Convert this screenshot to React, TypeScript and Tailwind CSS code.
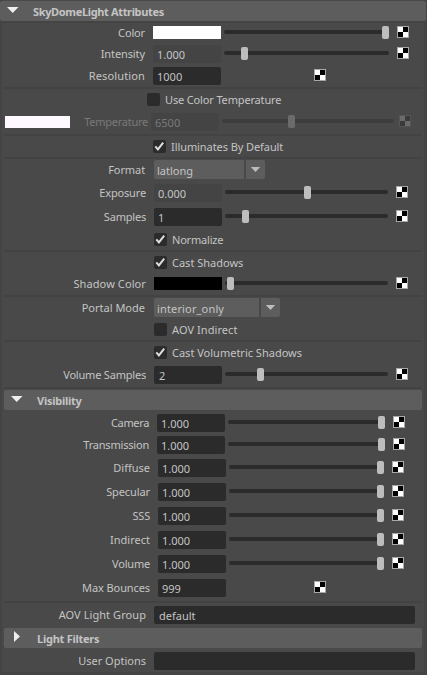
import React from "react";

function Checker({ className = "", dim = false }: { className?: string; dim?: boolean }) {
  const light = dim ? "#6b6b6b" : "#fff";
  const dark = dim ? "#3a3a3a" : "#000";
  return (
    <svg width="12" height="12" viewBox="0 0 12 12" shapeRendering="crispEdges" className={`mt-[2px] shrink-0 ${className}`}>
      <rect width="12" height="12" fill={dim ? "#555" : "#a8a8a8"} />
      <rect x="1" y="1" width="10" height="10" fill={light} />
      <rect x="6" y="1" width="5" height="5" fill={dark} />
      <rect x="1" y="6" width="5" height="5" fill={dark} />
    </svg>
  );
}

function Slider({ track, knob, dim = false }: { track: string; knob: string; dim?: boolean }) {
  return (
    <div className={`h-[18px] shrink-0 pt-[6px] ${track}`}>
      <div className={`relative h-1 rounded-full ${dim ? "bg-[#3d3d3d]" : "bg-[#2b2b2b]"}`}>
        <div className={`absolute -top-1 h-[13px] w-[7px] rounded-[2px] ${dim ? "bg-[#6b6b6b]" : "bg-[#bdbdbd]"} ${knob}`} />
      </div>
    </div>
  );
}

function Label({ className, text }: { className: string; text: string }) {
  return <div className={`shrink-0 text-right whitespace-nowrap leading-[18px] ${className}`}>{text}</div>;
}

function Field({ className = "ml-2 w-[68px] bg-[#2b2b2b] pl-1", value = "" }: { className?: string; value?: string }) {
  return <div className={`h-[18px] shrink-0 rounded-[2px] pt-px leading-[18px] ${className}`}>{value}</div>;
}

function Row({ className, children }: { className: string; children: React.ReactNode }) {
  return <div className={`flex h-[18px] shrink-0 items-start ${className}`}>{children}</div>;
}

function Check({ className, box = "ml-[154px]", checked = false, label, text = "" }: { className: string; box?: string; checked?: boolean; label: string; text?: string }) {
  return (
    <Row className={className}>
      <div className={`mt-[2px] h-[13px] w-[13px] shrink-0 rounded-[2px] bg-[#2b2b2b] ${box}`}>
        {checked && (
          <svg width="13" height="13" viewBox="0 0 13 13">
            <path d="M2.3 6.3 L4.9 9.4 L10.2 2.6" fill="none" stroke="#dedede" strokeWidth="2" />
          </svg>
        )}
      </div>
      <div className={`ml-[5px] whitespace-nowrap leading-[18px] ${text}`}>{label}</div>
    </Row>
  );
}

function Divider({ className }: { className: string }) {
  return <div className={`ml-1 h-[2px] w-[418px] shrink-0 bg-[#434343] ${className}`} />;
}

function Dropdown({ width, value }: { width: string; value: string }) {
  return (
    <div className="flex h-[19px] shrink-0 gap-[2px]">
      <div className={`rounded-l-[2px] bg-[#5d5d5d] pl-[3px] pt-[2px] leading-[18px] ${width}`}>{value}</div>
      <div className="w-[19px] rounded-r-[2px] bg-[#5d5d5d]">
        <svg width="19" height="19" viewBox="0 0 19 19">
          <path d="M4.8 7h9.4L9.5 12z" fill="#bdbdbd" />
        </svg>
      </div>
    </div>
  );
}

const attrs = [
  { name: "Camera", row: "mt-1", label: "w-[149px] tracking-[-0.35px]", near: true },
  { name: "Transmission", row: "mt-1", label: "w-[149px] tracking-[-0.2px]", near: true },
  { name: "Diffuse", row: "mt-[5px]", label: "w-[150px]", near: false },
  { name: "Specular", row: "mt-[6px]", label: "w-[150px] tracking-[-0.1px]", near: false },
  { name: "SSS", row: "mt-[6px]", label: "w-[150px] tracking-[-0.2px]", near: false },
  { name: "Indirect", row: "mt-[6px]", label: "w-[150px]", near: false },
  { name: "Volume", row: "mt-[6px]", label: "w-[150px] tracking-[-0.2px]", near: false },
];

export default function App() {
  return (
    <div className="flex h-[675px] w-[427px] flex-col overflow-hidden border-b-[3px] border-[#444] bg-[#494949] font-['Noto_Sans',sans-serif] text-[11px] text-[#c4c4c4] shadow-[inset_2px_0_#444,inset_-3px_0_#444]">
      <div className="mt-px flex h-5 w-[426px] shrink-0 rounded-[2px] bg-[#5d5d5d]">
        <svg width="33" height="20" viewBox="0 0 33 20"><path d="M7 6h11.5L12.7 12z" fill="#eee" /></svg>
        <div className="pt-px font-bold leading-5 tracking-[-0.35px]">SkyDomeLight Attributes</div>
      </div>
      <div className="h-[2px] shrink-0 bg-[#444]" />
      <Row className="mt-px">
        <Label className="w-[145px] tracking-[-0.15px]" text="Color" />
        <div className="ml-2 mt-[2px] h-[13px] w-[68px] bg-white" />
        <Slider track="ml-[3px] w-[165px]" knob="left-[158px]" />
        <Checker className="ml-2" />
      </Row>
      <Row className="mt-[3px]">
        <Label className="w-[145px] tracking-[-0.1px]" text="Intensity" />
        <Field className="ml-2 w-[68px] bg-[#444] pl-1" value="1.000" />
        <Slider track="ml-[3px] w-[165px]" knob="left-[17px]" />
        <Checker className="ml-2" />
      </Row>
      <Row className="mt-1">
        <Label className="w-[145px] tracking-[0.14px]" text="Resolution" />
        <Field value="1000" />
        <Checker className="ml-[93px]" />
      </Row>
      <Divider className="mt-[2px]" />
      <Check className="mt-[2px]" box="ml-[147px]" label="Use Color Temperature" text="tracking-[-0.15px]" />
      <Row className="mt-1 text-[#797979]">
        <div className="ml-[5px] mt-[3px] h-3 w-[65px] bg-[#fef8ff]" />
        <Label className="w-[78px] tracking-[-0.25px]" text="Temperature" />
        <Field className="ml-[3px] w-[68px] bg-[#444] pl-1" value="6500" />
        <Slider track="ml-[3px] w-[172px]" knob="left-[66px]" dim />
        <Checker className="ml-[5px]" dim />
      </Row>
      <Divider className="mt-[3px]" />
      <Check className="mt-[2px]" box="ml-[153px]" checked label="Illuminates By Default" text="tracking-[-0.08px]" />
      <Divider className="mt-px" />
      <Row className="mt-px">
        <Label className="w-[145px] pt-px tracking-[-0.1px]" text="Format" />
        <div className="ml-[9px]"><Dropdown width="w-[90px]" value="latlong" /></div>
      </Row>
      <Row className="mt-[6px]">
        <Label className="w-[146px] tracking-[-0.15px]" text="Exposure" />
        <Field className="ml-2 w-[68px] bg-[#444] pl-1" value="0.000" />
        <Slider track="ml-[3px] w-[163px]" knob="left-[79px]" />
        <Checker className="ml-2" />
      </Row>
      <Row className="mt-[6px]">
        <Label className="w-[146px] tracking-[-0.2px]" text="Samples" />
        <Field value="1" />
        <Slider track="ml-[3px] w-[163px]" knob="left-[17px]" />
        <Checker className="ml-2" />
      </Row>
      <Check className="mt-[5px]" checked label="Normalize" text="tracking-[-0.2px]" />
      <Divider className="mt-px" />
      <Check className="mt-[2px]" checked label="Cast Shadows" />
      <Row className="mt-[3px]">
        <Label className="w-[146px] tracking-[0.1px]" text="Shadow Color" />
        <div className="ml-2 mt-[2px] h-[13px] w-[68px] bg-black" />
        <Slider track="ml-[3px] w-[163px]" knob="left-[2px]" />
        <Checker className="ml-2" />
      </Row>
      <Divider className="mt-[2px]" />
      <Row className="mt-px">
        <Label className="w-[145px] pt-px" text="Portal Mode" />
        <div className="ml-[9px]"><Dropdown width="w-[105px] tracking-[0.15px]" value="interior_only" /></div>
      </Row>
      <Check className="mt-[5px]" label="AOV Indirect" text="tracking-[0.07px]" />
      <Divider className="mt-px" />
      <Check className="mt-[2px]" checked label="Cast Volumetric Shadows" />
      <Row className="mt-1">
        <Label className="w-[146px] tracking-[-0.2px]" text="Volume Samples" />
        <Field className="ml-2 w-[68px] bg-[#2b2b2b] pl-[5px]" value="2" />
        <Slider track="ml-[3px] w-[163px]" knob="left-[32px]" />
        <Checker className="ml-2" />
      </Row>
      <Divider className="mt-[3px]" />
      <div className="ml-1 mt-px flex h-5 w-[418px] shrink-0 rounded-[2px] bg-[#5d5d5d]">
        <svg width="33" height="20" viewBox="0 0 33 20"><path d="M7 6h11.5L12.7 12z" fill="#eee" /></svg>
        <div className="pt-px font-bold leading-5 tracking-[-0.25px]">Visibility</div>
      </div>
      {attrs.map((a) => (
        <Row key={a.name} className={a.row}>
          <Label className={a.label} text={a.name} />
          <Field value="1.000" />
          <Slider track={a.near ? "ml-[3px] w-[157px]" : "ml-[3px] w-[155px]"} knob={a.near ? "left-[150px]" : "left-[148px]"} />
          <Checker className="ml-2" />
        </Row>
      ))}
      <Row className="mt-[6px]">
        <Label className="w-[150px] tracking-[-0.1px]" text="Max Bounces" />
        <Field value="999" />
        <Checker className="ml-[88px]" />
      </Row>
      <Divider className="mt-1" />
      <Row className="mt-[3px]">
        <Label className="w-[146px] tracking-[0.07px]" text="AOV Light Group" />
        <Field className="ml-2 w-[261px] bg-[#2b2b2b] pl-[5px]" value="default" />
      </Row>
      <div className="ml-1 mt-1 flex h-5 w-[418px] shrink-0 rounded-[2px] bg-[#5d5d5d]">
        <svg width="33" height="20" viewBox="0 0 33 20"><path d="M10 3v11l6-5.5z" fill="#eee" /></svg>
        <div className="pt-px font-bold leading-5 tracking-[-0.25px]">Light Filters</div>
      </div>
      <Row className="mt-1">
        <Label className="w-[146px]" text="User Options" />
        <Field className="ml-2 w-[261px] bg-[#2b2b2b]" />
      </Row>
    </div>
  );
}
